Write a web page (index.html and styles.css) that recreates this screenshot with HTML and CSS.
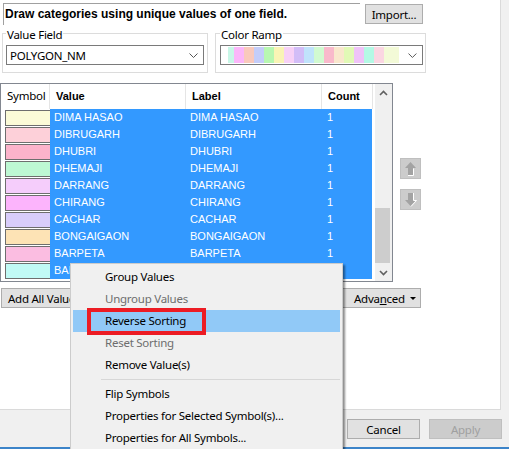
FILE: index.html
```html
<!DOCTYPE html>
<html lang="en">
<head>
    <meta charset="UTF-8">
    <title>Layer Properties - Symbology</title>
    <link rel="stylesheet" href="styles.css">
</head>
<body>
    <!-- symbology page -->
    <div class="panel">
        <div class="top-row">
            <div class="description">Draw categories using unique values of one field.</div>
            <div class="btn import-btn">Import...</div>
        </div>

        <div class="field-row">
            <div class="group group-field">
                <span class="caption">Value Field</span>
                <div class="select select-field">
                    <span class="select-text">POLYGON_NM</span>
                    <svg class="chevron" width="9" height="5" viewBox="0 0 9 5"><polyline points="0.5,0.5 4.5,4.5 8.5,0.5" fill="none" stroke="#555" stroke-width="1"/></svg>
                </div>
            </div>
            <div class="group group-ramp">
                <span class="caption">Color Ramp</span>
                <div class="select select-ramp">
                    <div class="ramp"></div>
                    <svg class="chevron" width="9" height="5" viewBox="0 0 9 5"><polyline points="0.5,0.5 4.5,4.5 8.5,0.5" fill="none" stroke="#555" stroke-width="1"/></svg>
                </div>
            </div>
        </div>

        <div class="list-area">
            <div class="list">
                <div class="list-main">
                    <div class="list-head">
                        <div class="hcell c-symbol">Symbol</div>
                        <div class="hcell c-value">Value</div>
                        <div class="hcell c-label">Label</div>
                        <div class="hcell c-count">Count</div>
                    </div>
                    <div class="list-body">
                        <div class="row"><div class="c-symbol"><div class="swatch"></div></div><div class="sel"><div class="c-value">DIMA HASAO</div><div class="c-label">DIMA HASAO</div><div class="c-count">1</div></div></div>
                        <div class="row"><div class="c-symbol"><div class="swatch"></div></div><div class="sel"><div class="c-value">DIBRUGARH</div><div class="c-label">DIBRUGARH</div><div class="c-count">1</div></div></div>
                        <div class="row"><div class="c-symbol"><div class="swatch"></div></div><div class="sel"><div class="c-value">DHUBRI</div><div class="c-label">DHUBRI</div><div class="c-count">1</div></div></div>
                        <div class="row"><div class="c-symbol"><div class="swatch"></div></div><div class="sel"><div class="c-value">DHEMAJI</div><div class="c-label">DHEMAJI</div><div class="c-count">1</div></div></div>
                        <div class="row"><div class="c-symbol"><div class="swatch"></div></div><div class="sel"><div class="c-value">DARRANG</div><div class="c-label">DARRANG</div><div class="c-count">1</div></div></div>
                        <div class="row"><div class="c-symbol"><div class="swatch"></div></div><div class="sel"><div class="c-value">CHIRANG</div><div class="c-label">CHIRANG</div><div class="c-count">1</div></div></div>
                        <div class="row"><div class="c-symbol"><div class="swatch"></div></div><div class="sel"><div class="c-value">CACHAR</div><div class="c-label">CACHAR</div><div class="c-count">1</div></div></div>
                        <div class="row"><div class="c-symbol"><div class="swatch"></div></div><div class="sel"><div class="c-value">BONGAIGAON</div><div class="c-label">BONGAIGAON</div><div class="c-count">1</div></div></div>
                        <div class="row"><div class="c-symbol"><div class="swatch"></div></div><div class="sel"><div class="c-value">BARPETA</div><div class="c-label">BARPETA</div><div class="c-count">1</div></div></div>
                        <div class="row"><div class="c-symbol"><div class="swatch"></div></div><div class="sel"><div class="c-value">BAKSA</div><div class="c-label">BAKSA</div><div class="c-count">1</div></div></div>
                    </div>
                </div>
                <div class="scrollbar">
                    <div class="sb-btn"><svg width="9" height="6" viewBox="0 0 9 6"><polyline points="1,5 4.5,1.5 8,5" fill="none" stroke="#606060" stroke-width="1.6"/></svg></div>
                    <div class="sb-track"><div class="sb-thumb"></div></div>
                    <div class="sb-btn"><svg width="9" height="6" viewBox="0 0 9 6"><polyline points="1,1 4.5,4.5 8,1" fill="none" stroke="#606060" stroke-width="1.6"/></svg></div>
                </div>
            </div>

            <div class="move-col">
                <div class="move-btn">
                    <svg width="19" height="19" viewBox="0 0 19 19">
                        <polygon points="9.5,3 15,9 12,9 12,16 7,16 7,9 4,9" fill="#a3a3a3"/>
                        <polyline points="12.5,9.5 12.5,16.5 7,16.5" fill="none" stroke="#fff" stroke-width="1"/>
                    </svg>
                </div>
                <div class="move-btn">
                    <svg width="19" height="19" viewBox="0 0 19 19">
                        <polygon points="7,3 12,3 12,10 15,10 9.5,16 4,10 7,10" fill="#a3a3a3"/>
                        <polyline points="12.5,3 12.5,10.5 15.5,10.5 10,16.5" fill="none" stroke="#fff" stroke-width="1"/>
                    </svg>
                </div>
            </div>
        </div>

        <div class="button-row">
            <div class="btn btn-add-all">Add All Values</div>
            <div class="btn btn-add">Add Values...</div>
            <div class="btn btn-remove">Remove</div>
            <div class="btn btn-remove-all">Remove All</div>
            <div class="btn btn-advanced">Adva<u>n</u>ced<span class="caret"></span></div>
        </div>
    </div>

    <div class="footer">
        <div class="btn footer-btn">Cancel</div>
        <div class="btn footer-btn disabled">Apply</div>
    </div>
    <div class="window-edge"></div>

    <!-- right-click menu -->
    <div class="context-menu">
        <div class="menu-item">Group Values</div>
        <div class="menu-item disabled">Ungroup Values</div>
        <div class="menu-item active">Reverse Sorting<span class="mark"></span></div>
        <div class="menu-item disabled">Reset Sorting</div>
        <div class="menu-item">Remove Value(s)</div>
        <div class="menu-sep"></div>
        <div class="menu-item">Flip Symbols</div>
        <div class="menu-item">Properties for Selected Symbol(s)...</div>
        <div class="menu-item">Properties for All Symbols...</div>
    </div>
</body>
</html>
```
FILE: styles.css
```css
* {
    margin: 0;
    padding: 0;
    box-sizing: border-box;
}

body {
    width: 509px;
    height: 449px;
    overflow: hidden;
    position: relative;
    background: #f0f0f0;
    color: #000;
    font-family: "Noto Sans", "DejaVu Sans", sans-serif;
    font-size: 11.5px;
    letter-spacing: -0.25px;
}

/* 白色主面板 */
.panel {
    width: 501px;
    height: 410px;
    background: #fff;
    border-right: 1px solid #dadada;
    border-bottom: 1px solid #dadada;
}

.top-row {
    display: flex;
    align-items: flex-start;
    height: 25px;
    padding-top: 3px;
}

.description {
    margin-left: 3px;
    width: 357px;
    height: 22px;
    padding-left: 1px;
    border-top: 1px solid #a0a0a0;
    border-left: 1px solid #a0a0a0;
    font-family: "Liberation Sans", Arial, sans-serif;
    font-weight: bold;
    font-size: 12px;
    letter-spacing: 0;
    line-height: 21px;
}

.btn {
    display: flex;
    align-items: center;
    justify-content: center;
    flex-shrink: 0;
    height: 20px;
    background: #e1e1e1;
    border: 1px solid #adadad;
    white-space: nowrap;
}

.import-btn {
    margin-left: 5px;
    margin-top: 1px;
    width: 58px;
}

/* 分组框 */
.field-row {
    display: flex;
    gap: 7px;
    margin-top: 8px;
    padding-left: 2px;
}

.group {
    border: 1px solid #dcdcdc;
    padding-bottom: 7px;
}

.group-field {
    width: 206px;
    padding-left: 3px;
}

.group-ramp {
    width: 211px;
    padding-left: 4px;
}

.caption {
    display: block;
    width: fit-content;
    margin: -6px 0 0 0;
    padding: 0 1px;
    background: #fff;
    line-height: 14px;
}

.select {
    display: flex;
    align-items: center;
    height: 20px;
    margin-top: 3px;
    border: 1px solid #7a7a7a;
    background: #fff;
}

.select-field {
    width: 198px;
    padding-left: 3px;
}

.select-ramp {
    width: 203px;
    padding-left: 7px;
}

.select-text {
    flex: 1;
}

.chevron {
    margin-right: 5px;
}

.select-ramp .chevron {
    margin-left: 9px;
}

.ramp {
    width: 174px;
    height: 16px;
    background: linear-gradient(to right,
        #c8f7e7 0 6px, #fbb6f9 6px 16px, #f9c9bc 16px 26px, #c4cdf9 26px 36px,
        #b8f7b1 36px 46px, #f9f4b5 46px 56px, #f7d1f6 56px 66px, #d2bdf7 66px 76px,
        #c0e3fb 76px 86px, #d1fad0 86px 96px, #f9b9cb 96px 106px, #f9e7cd 106px 116px,
        #e1f9b6 116px 126px, #efc3f8 126px 136px, #b4f9e5 136px 146px, #fbd6e2 146px 156px,
        #f3fad7 156px 174px);
}

/* 列表 */
.list-area {
    display: flex;
    margin-top: 10px;
}

.list {
    display: flex;
    width: 393px;
    height: 199px;
    border: 1px solid #828790;
    overflow: hidden;
}

.list-main {
    width: 374px;
}

.list-head {
    display: flex;
    height: 25px;
    font-family: "Liberation Sans", Arial, sans-serif;
    font-weight: bold;
    font-size: 11px;
    letter-spacing: 0;
}

.hcell {
    padding-left: 6px;
    line-height: 24px;
    border-right: 1px solid #e5e5e5;
}

.hcell.c-symbol {
    font-family: "Noto Sans", sans-serif;
    font-weight: normal;
    font-size: 11.5px;
    letter-spacing: -0.25px;
}

.c-symbol { width: 49px; }
.c-value { width: 136px; }
.c-label { width: 136px; }
.c-count { width: 51px; }

.row {
    display: flex;
    height: 17px;
}

.row .c-symbol {
    padding: 1px 0 0 4px;
}

.swatch {
    height: 16px;
    border: 1px solid #6e6e6e;
    border-right: none;
}

.row:nth-child(1) .swatch { background: #fbfbd7; }
.row:nth-child(2) .swatch { background: #fdd0d9; }
.row:nth-child(3) .swatch { background: #fcb3cb; }
.row:nth-child(4) .swatch { background: #bdf8d3; }
.row:nth-child(5) .swatch { background: #f5cdfb; }
.row:nth-child(6) .swatch { background: #fcb4fc; }
.row:nth-child(7) .swatch { background: #d8cdfb; }
.row:nth-child(8) .swatch { background: #fde3b5; }
.row:nth-child(9) .swatch { background: #fbbde1; }
.row:nth-child(10) .swatch { background: #c1faf5; }

.sel {
    display: flex;
    width: 322px;
    background: #3399ff;
    color: #fff;
    font-family: "Liberation Sans", Arial, sans-serif;
    font-size: 11px;
    letter-spacing: 0;
    line-height: 17px;
}

.sel > div {
    padding-left: 4px;
}

.sel .c-count {
    width: 50px;
    padding-left: 5px;
}

.scrollbar {
    display: flex;
    flex-direction: column;
    width: 17px;
    background: #f0f0f0;
}

.sb-btn {
    display: flex;
    align-items: center;
    justify-content: center;
    height: 17px;
}

.sb-track {
    flex: 1;
    padding-top: 107px;
}

.sb-thumb {
    width: 15px;
    height: 55px;
    background: #cdcdcd;
}

.move-col {
    display: flex;
    flex-direction: column;
    gap: 10px;
    margin: 75px 0 0 7px;
}

.move-btn {
    width: 21px;
    height: 21px;
    background: #cccccc;
    border: 1px solid #bfbfbf;
}

.move-btn svg {
    display: block;
}

/* 列表下方按钮 */
.button-row {
    display: flex;
    gap: 6px;
    margin-top: 6px;
    padding-left: 1px;
}

.btn-add-all { width: 86px; justify-content: flex-start; padding-left: 6px; }
.btn-add { width: 80px; }
.btn-remove { width: 60px; }
.btn-remove-all { width: 70px; }

.btn-advanced {
    width: 91px;
    margin-left: 9px;
    justify-content: flex-start;
    padding-left: 23px;
}

.caret {
    margin-left: auto;
    margin-right: 4px;
    border-left: 3px solid transparent;
    border-right: 3px solid transparent;
    border-top: 3px solid #000;
}

/* 底部 */
.footer {
    display: flex;
    justify-content: flex-end;
    gap: 9px;
    padding: 9px 7px 0 0;
    height: 37px;
}

.footer-btn {
    width: 73px;
}

.footer-btn.disabled {
    background: #cccccc;
    border-color: #bfbfbf;
    color: #a0a0a0;
}

.window-edge {
    height: 2px;
    background: #3c84c9;
}

/* 右键菜单 */
.context-menu {
    position: absolute;
    left: 70px;
    top: 263px;
    width: 273px;
    padding: 2px 2px 24px;
    background: #f0f0f0;
    border: 1px solid #cccccc;
    box-shadow: 2px 2px 2px rgba(0, 0, 0, 0.45);
    font-size: 11.5px;
}

.menu-item {
    height: 22px;
    line-height: 22px;
    padding-left: 32px;
    white-space: nowrap;
}

.menu-item.disabled {
    color: #6d6d6d;
}

.menu-item.active {
    position: relative;
    background: #91c9f7;
}

.mark {
    position: absolute;
    left: 14px;
    top: -2px;
    width: 119px;
    height: 27px;
    border: 4px solid #ec1c24;
}

.menu-sep {
    margin: 3px 0 3px 28px;
    border-top: 1px solid #d7d7d7;
}
```
